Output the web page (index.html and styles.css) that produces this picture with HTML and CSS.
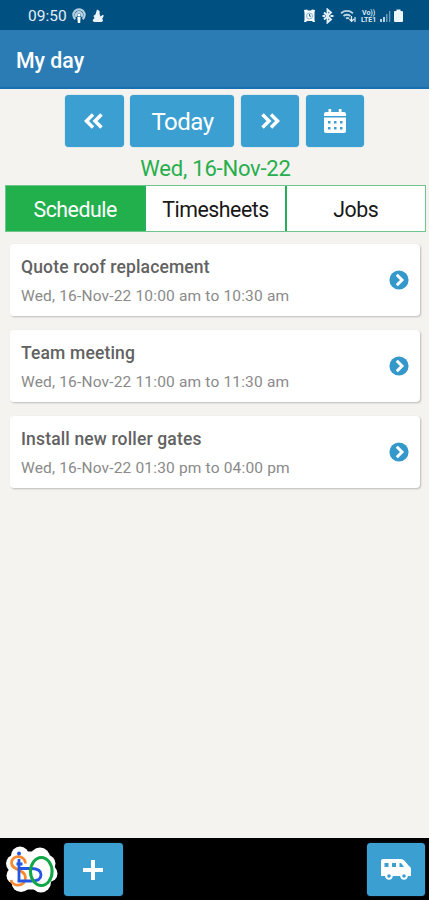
FILE: index.html
```html
<!DOCTYPE html>
<html lang="en">
<head>
<meta charset="utf-8">
<title>My day</title>
<link rel="stylesheet" href="styles.css">
</head>
<body>
<div class="app">
  <div class="status">
    <span class="clock">09:50</span>
    <svg class="status-left" width="34" height="16" viewBox="0 0 34 16">
      <g fill="none" stroke="#b5d0e0" stroke-width="2.200"><path d="M3.400 11.200A5.600 5.600 0 1 1 10.600 11.200"/><path d="M4.500 8.800A3 3 0 1 1 9.500 8.800"/></g>
      <circle cx="7" cy="7" r="1.600" fill="#fff"/><path d="M5.400 9h3.200l-.4 6H5.800z" fill="#fff"/>
      <path d="M25 1.500l2.600 1.400v3.400l1 2.200 2.200-1.700 1 1-1.500 2.900.8 2-1.500 1.300h-8l-1-2 2-2-1.200-2 2.200-1.800z" fill="#e9f3f8"/>
    </svg>
    <svg class="status-right" width="102" height="16" viewBox="-1 0 102 16">
      <path fill="#f4f9fc" d="M1 2l3-.6 1 1h3l1-1 3 .6-.5 3v7l.5 2h-2l-1-1H4l-1 1H1l.5-2V5z"/>
      <circle cx="6.500" cy="8" r="3" fill="none" stroke="#8db3cc"/><path d="M6.500 6v2.200H8" fill="none" stroke="#246a98"/>
      <path d="M21 4.500l7 7-3.500 3v-13l3.500 3-7 7M19.500 8h2.500M27.500 8h3" fill="none" stroke="#e3eff6" stroke-width="1.900"/>
      <path d="M38 5.200q6-4.500 12 0M40.500 8q3.500-2.500 7 0M43 10.500q1.500-1 3 0" fill="none" stroke="#bcd5e4" stroke-width="1.800"/>
      <path d="M48.500 13V8m-2 3l2 2.400L51 11M52 14V9" fill="none" stroke="#e4f0f6" stroke-width="1.200"/>
      <g fill="#d9e9f2" class="volte"><text x="59" y="7.300">Vo))</text><text x="58" y="14.300">LTE1</text></g>
      <path d="M77 14v-3h2v3zM80 14V9h2v5z" fill="#b6d0e0"/><path d="M83 14V6h1.500v8zM86 14V3h1.300v11z" fill="#6c9dba"/>
      <path d="M92 3h1.500V1.500h4V3h1.500q1 0 1 1v9q0 1-1 1H92q-1 0-1-1V4q0-1 1-1z" fill="#edf6fa"/>
    </svg>
  </div>
  <header class="bar"><h1>My day</h1></header>
  <main>
    <div class="controls">
      <button class="btn"><svg width="20" height="18" viewBox="0 0 20 18"><path d="M9 2.500L2.500 9 9 15.500M17.500 2.500L11 9l6.500 6.500" fill="none" stroke="#fff" stroke-width="3.500"/></svg></button>
      <button class="btn today"><span>Today</span></button>
      <button class="btn"><svg width="20" height="18" viewBox="0 0 20 18"><path d="M2.500 2.500L9 9l-6.500 6.500M11 2.500L17.500 9 11 15.500" fill="none" stroke="#fff" stroke-width="3.500"/></svg></button>
      <button class="btn cal"><svg width="22" height="24" viewBox="0 0 22 24"><path fill="#fff" fill-rule="evenodd" d="M4.500 0h2.700v3h7.600V0h2.700v3H20q2 0 2 2v2H0V5q0-2 2-2h2.500zM0 8.500h22V22q0 2-2 2H2q-2 0-2-2zM4 12v2.500h2.500V12zm6 0v2.500h2.500V12zm6 0v2.500h2.500V12zM4 18v2.500h2.500V18zm6 0v2.500h2.500V18zm6 0v2.500h2.500V18z"/></svg></button>
    </div>
    <div class="date"><span>Wed, 16-Nov-22</span></div>
    <nav class="tabs">
      <a class="tab active">Schedule</a><a class="tab">Timesheets</a><a class="tab">Jobs</a>
    </nav>
    <div class="list">
      <article class="card"><div><h2>Quote roof replacement</h2><p>Wed, 16-Nov-22 10:00 am to 10:30 am</p></div><svg class="go" width="20" height="20" viewBox="0 0 20 20"><circle cx="10" cy="10" r="9.600" fill="#3498cb"/><path d="M7.800 4.800L13 10l-5.200 5.200" fill="none" stroke="#fff" stroke-width="3"/></svg></article>
      <article class="card"><div><h2>Team meeting</h2><p>Wed, 16-Nov-22 11:00 am to 11:30 am</p></div><svg class="go" width="20" height="20" viewBox="0 0 20 20"><circle cx="10" cy="10" r="9.600" fill="#3498cb"/><path d="M7.800 4.800L13 10l-5.200 5.200" fill="none" stroke="#fff" stroke-width="3"/></svg></article>
      <article class="card"><div><h2>Install new roller gates</h2><p>Wed, 16-Nov-22 01:30 pm to 04:00 pm</p></div><svg class="go" width="20" height="20" viewBox="0 0 20 20"><circle cx="10" cy="10" r="9.600" fill="#3498cb"/><path d="M7.800 4.800L13 10l-5.200 5.200" fill="none" stroke="#fff" stroke-width="3"/></svg></article>
    </div>
  </main>
  <footer class="dock">
    <svg class="logo" width="54" height="50" viewBox="4 844.500 54 50">
      <g fill="#fff"><circle cx="20" cy="855" r="9"/><circle cx="15" cy="863" r="9"/><circle cx="15" cy="875" r="8.500"/><circle cx="21" cy="882" r="9.500"/><circle cx="40" cy="857" r="10"/><circle cx="47" cy="863" r="8.500"/><circle cx="49" cy="873" r="8.500"/><circle cx="41" cy="882" r="10"/><path d="M16 851h28v38H16z"/></g>
      <g fill="none" stroke-width="2.800"><path stroke="#f58a32" d="M25.500 863C25 854 11.500 854 11.500 862.500c0 7.500 14 6 14 14.500 0 9.500-13 10-14.500 2.500"/>
      <path stroke="#2456e3" stroke-width="2.800" d="M19 858.500V880.500M16.500 863.500H22.500M19 868H31c7.500 0 10 3 10 6.200s-2.500 6.300-10 6.300H17.500"/>
      <ellipse cx="41.300" cy="871" rx="10.800" ry="14" stroke="#12a746" stroke-width="3"/></g><circle cx="19" cy="853" r="2" fill="#2456e3"/>
    </svg>
    <button class="btn"><svg width="20" height="20" viewBox="0 0 20 20"><path d="M10 0v20M0 10h20" stroke="#fff" stroke-width="4"/></svg></button>
    <button class="btn van"><svg width="30" height="22" viewBox="0 0 30 22"><path fill="#fff" fill-rule="evenodd" d="M2 0h18q2 0 3.500 1.700L28 7q2 1 2 3v7h-3.200a4 4 0 0 1-7.600 0h-7.400a4 4 0 0 1-7.600 0H0V2Q0 0 2 0zM3.500 4v4h4V4zm7.500 0v4h4V4zm7.500 0v4H23l-3-4z"/><circle cx="8" cy="17" r="3.700" fill="#fff"/><circle cx="23" cy="17" r="3.700" fill="#fff"/><circle cx="8" cy="17" r="1.800" fill="#3b9fd1"/><circle cx="23" cy="17" r="1.800" fill="#3b9fd1"/></svg></button>
  </footer>
</div>
</body>
</html>
```
FILE: styles.css
```css
* { box-sizing: border-box; }
body { margin: 0; font-family: Roboto, "Liberation Sans", sans-serif; background: #f4f3ef; }
h1, h2, p { margin: 0; }
.app { width: 429px; height: 900px; display: flex; flex-direction: column; overflow: hidden; }
.status { height: 30px; background: #005082; display: flex; align-items: center; padding: 2px 25px 0 28px; color: #e3eff6; }
.clock { font-size: 15.5px; line-height: 18px; width: 44px; white-space: nowrap; }
.status-right { margin-left: auto; }
.volte { font: bold 7px Roboto, sans-serif; }
.bar { height: 59px; background: #2b7cb5; border-bottom: 2px solid #1870b3; display: flex; align-items: center; padding: 5px 16px 0; }
.bar h1 { color: #fff; font-size: 21.3px; font-weight: 500; line-height: 26px; }
main { flex: 1; }
.controls { display: flex; gap: 6.5px; padding: 6px 0 0 65px; }
.btn { width: 58.5px; height: 52px; border: 0; border-radius: 4px; padding: 0; background: #3b9fd1; display: flex; align-items: center; justify-content: center; color: #fff; font: 24px Roboto, sans-serif; box-shadow: 0 0 1px #3b9fd1; }
.today { width: 104px; }
.today span { padding: 1px 0 0 1px; letter-spacing: -.5px; }
.cal svg { margin-bottom: 1px; }
.date { color: #27ae4d; font-size: 22px; letter-spacing: -.22px; line-height: 26px; height: 38px; padding: 9px 0 0 2px; text-align: center; }
.tabs { height: 47px; margin: 0 3px 0 5px; display: flex; background: #fff; border: 1px solid #6fc68b; }
.tab { flex: 1; display: flex; align-items: center; justify-content: center; padding-top: 2px; font-size: 21.3px; letter-spacing: -.45px; color: #181818; }
.tab + .tab { border-left: 2px solid #27ae58; }
.tab.active { background: #22b04c; color: #fff; }
.list { padding: 12px 9px 0 10px; display: flex; flex-direction: column; gap: 14px; }
.card { height: 72px; background: #fff; border-radius: 4px; box-shadow: 1px 1px 2px #bbb; display: flex; align-items: center; justify-content: space-between; padding: 2px 11px 0 11px; }
.card h2 { font-size: 17.5px; letter-spacing: .15px; line-height: 24px; font-weight: 500; color: #626262; }
.card p { font-size: 15.5px; letter-spacing: .17px; line-height: 22px; margin-top: 6px; color: #8a8a8a; }
.go { margin-top: -3px; }
.dock { height: 62px; background: #000; display: flex; align-items: center; padding: 1px 4px 0 4px; }
.logo { margin-right: 6px; }
.dock .btn { height: 53px; }
.van { margin-left: auto; }
```
